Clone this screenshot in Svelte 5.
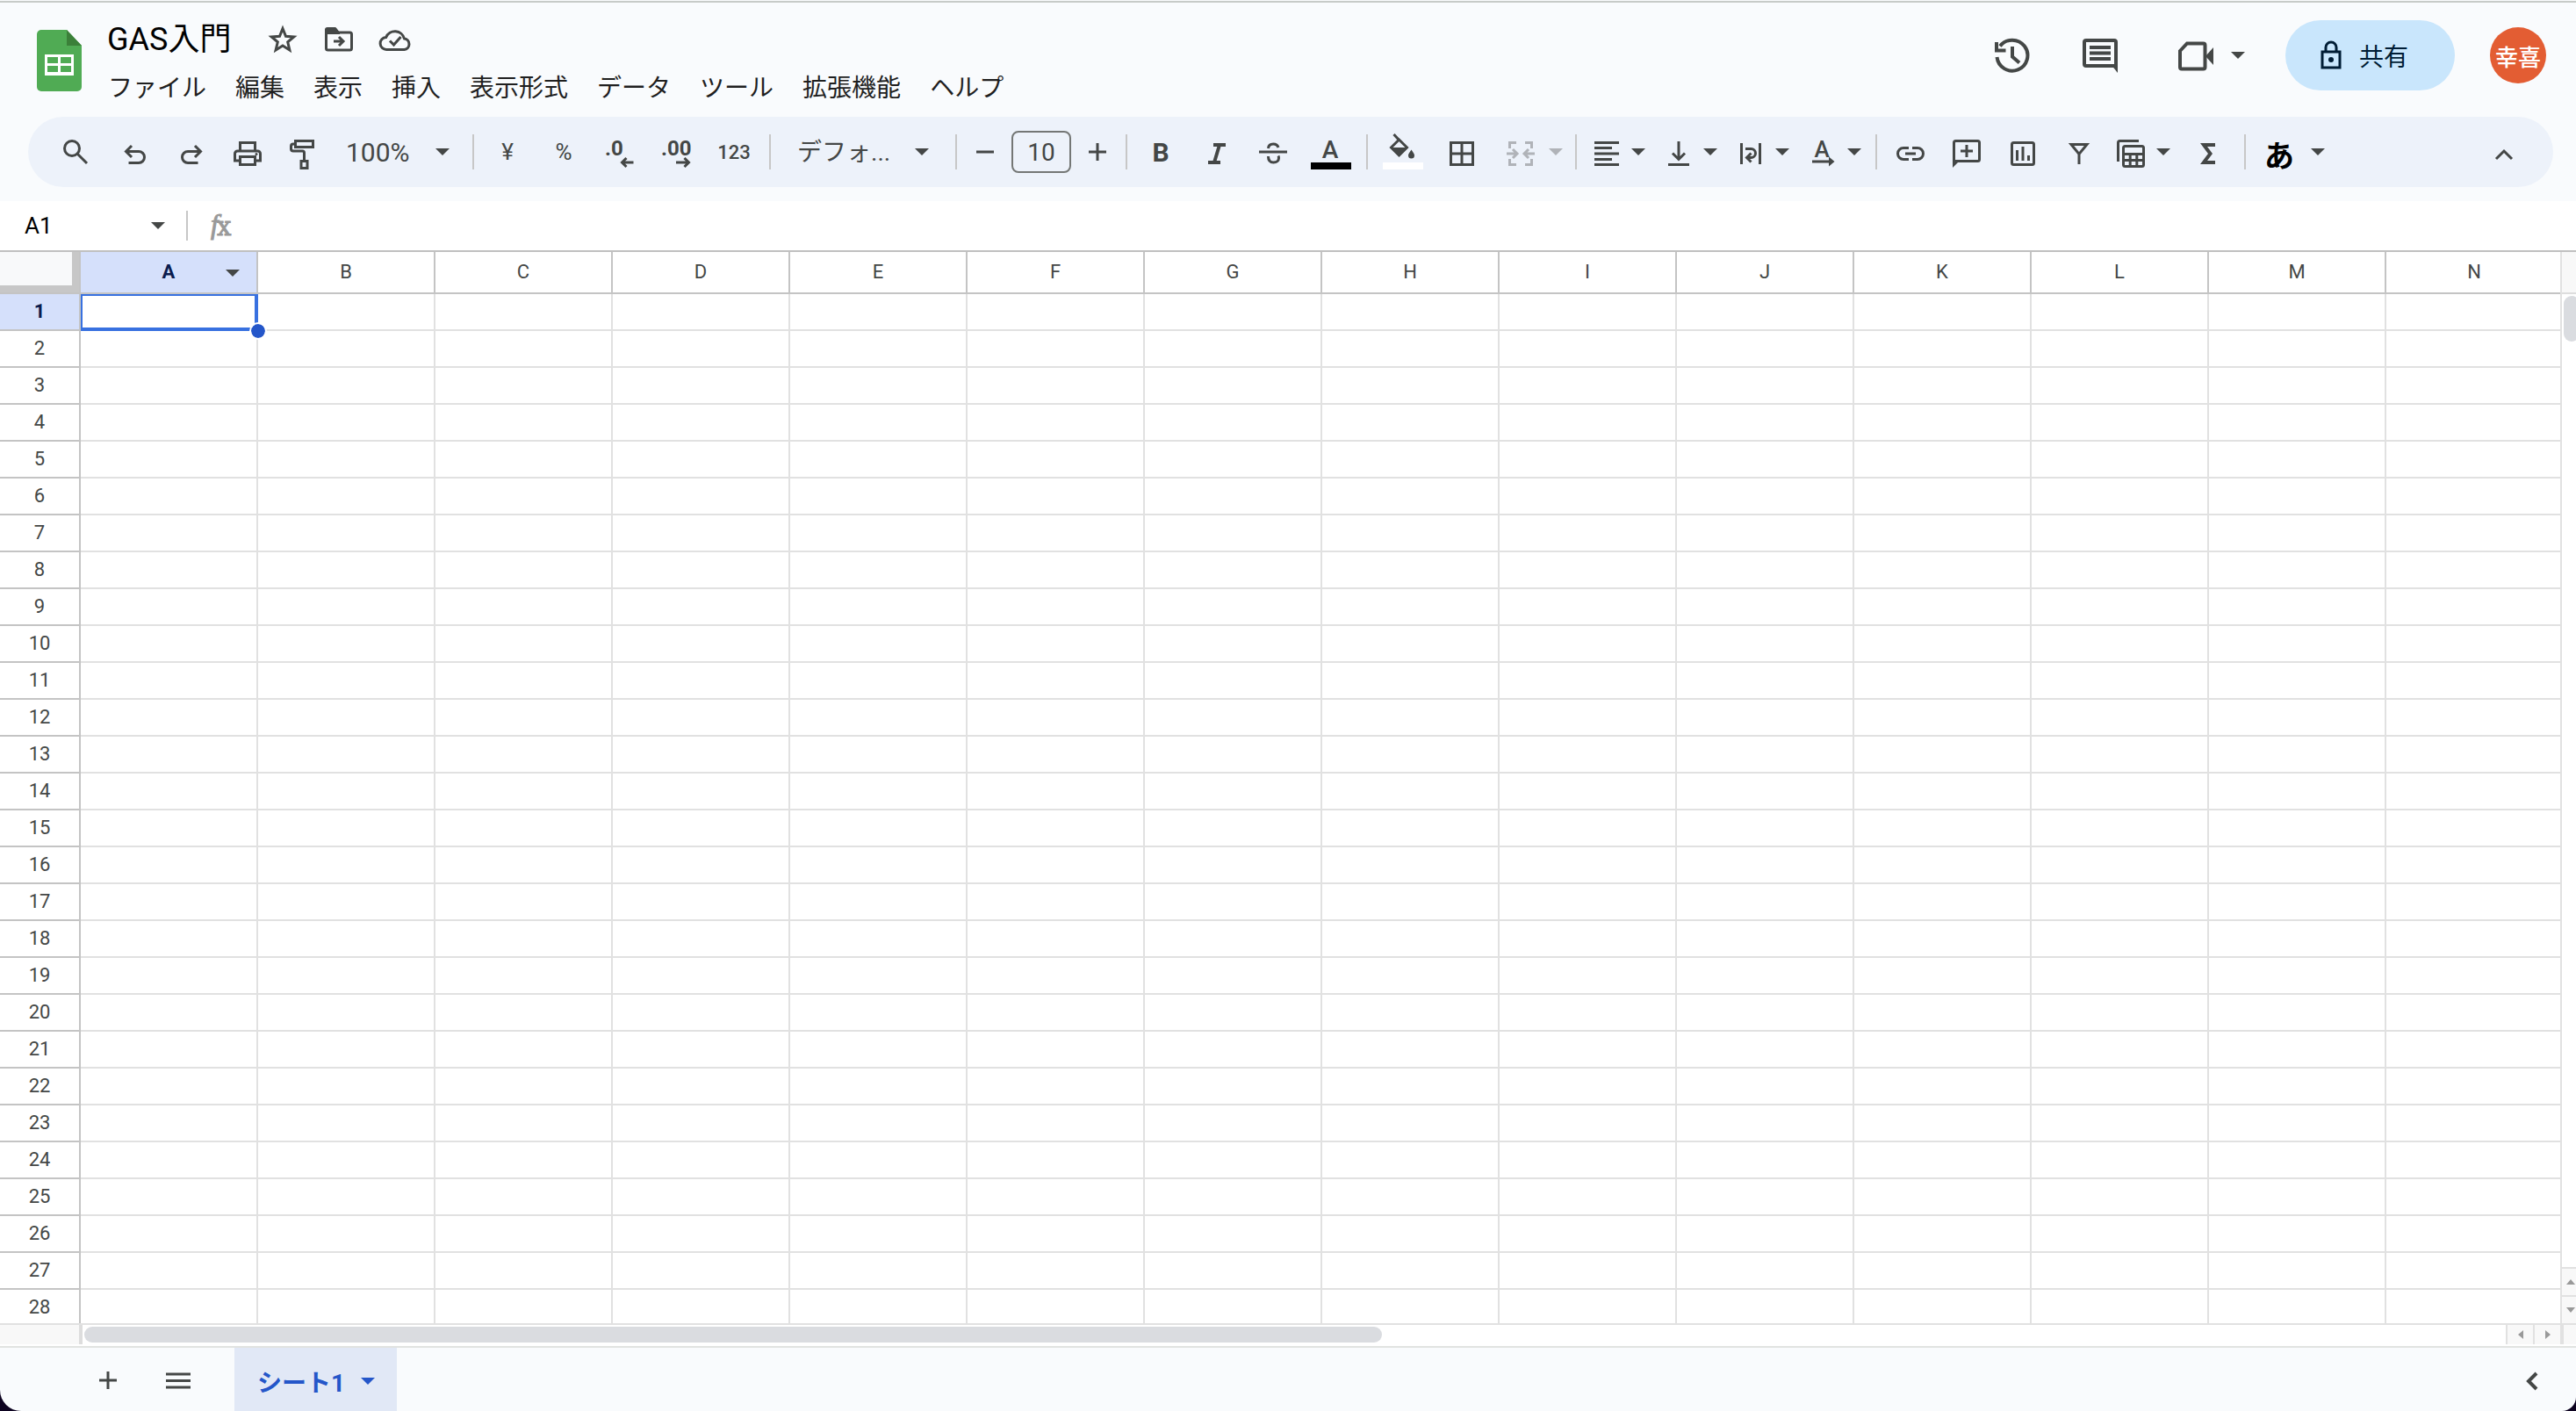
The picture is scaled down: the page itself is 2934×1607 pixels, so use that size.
<script lang="ts">
	const menus = ['ファイル', '編集', '表示', '挿入', '表示形式', 'データ', 'ツール', '拡張機能', 'ヘルプ'];
	const columns = 'ABCDEFGHIJKLMN'.split('');
	const rows = Array.from({ length: 28 }, (_, i) => i + 1);

	let title = $state('GAS入門');
	let zoom = $state('100%');
	let font = $state('デフォ...');
	let fontSize = $state('10');
	let cellName = $state('A1');
	let formula = $state('');
	let selected = $state({ column: 'A', row: 1 });

	// visible part of the sheet
	let thumbWidth = 53.6;

	function select(column: string, row: number) {
		selected = { column, row };
		cellName = column + row;
	}
</script>

{#snippet caret()}
	<svg class="caret" viewBox="0 0 16 8" aria-hidden="true"><path d="M0 0h16L8 8z" /></svg>
{/snippet}

<div class="app">
	<header>
		<svg class="logo" viewBox="0 0 52 70" aria-hidden="true">
			<path d="M5 0h29l17 18v47a5 5 0 0 1-5 5H5a5 5 0 0 1-5-5V5a5 5 0 0 1 5-5z" fill="#50ab54" />
			<path d="M34 0l17 18H34z" fill="#3b8039" />
			<path d="M9 28h33v24H9zM12 31v7h12v-7zM27 31v7h12v-7zM12 41v7h12v-7zM27 41v7h12v-7z" fill="#fff" fill-rule="evenodd" />
		</svg>

		<div class="doc">
			<div class="title-row">
				<input class="title" aria-label="名前を変更" bind:value={title} />
				<button class="tool" aria-label="スター">
					<svg class="icon" viewBox="0 0 40 40"><path d="M20 7.500l3.500 8.700 9.300.7-7.100 6 2.200 9.100-7.900-4.900-7.900 4.900 2.200-9.100-7.100-6 9.300-.7z" /></svg>
				</button>
				<button class="tool" aria-label="移動">
					<svg class="icon" viewBox="0 0 40 40">
						<path d="M5.500 13V10a2 2 0 0 1 2-2H16l3 4h13.500a2 2 0 0 1 2 2v16a2 2 0 0 1-2 2h-25a2 2 0 0 1-2-2z" />
						<path d="M4 14V9a3 3 0 0 1 3-3h9l5 6v2z" class="solid" />
						<path d="M14 22h9M20 17l5 5-5 5" />
					</svg>
				</button>
				<button class="tool" aria-label="ドキュメントのステータス">
					<svg class="icon" viewBox="0 0 40 40">
						<path d="M10.500 31.500a7 7 0 0 1-.8-14 11 11 0 0 1 20.800 1.500 6.300 6.300 0 0 1 0 12.500z" />
						<path d="M14 21.500l4.500 4.500 8-9" />
					</svg>
				</button>
			</div>
			<nav>
				{#each menus as menu}
					<button>{menu}</button>
				{/each}
			</nav>
		</div>

		<div class="actions">
			<button class="action" aria-label="変更履歴">
				<svg class="icon thick" viewBox="0 0 40 40">
					<path d="M2.500 22a17.500 17.500 0 1 0 3.500-12.500" />
					<path d="M2 5v9.500h10.500M20 10v11.500l8 7" />
				</svg>
			</button>
			<button class="action" aria-label="コメント">
				<svg class="icon thick" viewBox="0 0 40 40">
					<path d="M38 35V5a2 2 0 0 0-2-2H4a2 2 0 0 0-2 2v25a2 2 0 0 0 2 2h33" />
					<path d="M32 30h8v10z" class="solid" />
					<path d="M8 11h24M8 17.500h24M8 24h24" />
				</svg>
			</button>
			<button class="meet" aria-label="ビデオ会議">
				<svg class="icon thick" viewBox="0 0 40 40">
					<path d="M2 15l8-8.500h18.500a2 2 0 0 1 2 2v25a2 2 0 0 1-2 2H4a2 2 0 0 1-2-2z" />
					<path d="M31 21l9-10v20z" class="solid" />
				</svg>
				{@render caret()}
			</button>
			<button class="share">
				<svg class="icon" viewBox="0 0 24 34">
					<path d="M2 13h20v18H2zM6 12V8a6 6 0 0 1 12 0v4" />
					<circle cx="12" cy="22" r="3" class="solid" />
				</svg>
				共有
			</button>
			<button class="avatar">幸喜</button>
		</div>
	</header>

	<div class="toolbar">
		<button class="tool search" aria-label="メニューを検索">
			<svg class="icon" viewBox="0 0 40 40"><ellipse cx="16" cy="16" rx="8.500" ry="8.500" /><path d="M22.500 22.500L33 33" /></svg>
		</button>
		<button class="tool" aria-label="元に戻す">
			<svg class="icon" viewBox="0 0 40 40"><path d="M10 19.500h14a6.500 6.500 0 0 1 0 13H12.500M16 13l-6.500 6.500L16 26" /></svg>
		</button>
		<button class="tool" aria-label="やり直し">
			<svg class="icon" viewBox="0 0 40 40"><path d="M30 19.500H16a6.500 6.500 0 0 0 0 13h11.500M24 13l6.500 6.500L24 26" /></svg>
		</button>
		<button class="tool" aria-label="印刷">
			<svg class="icon" viewBox="0 0 40 40">
				<path d="M11.500 19V9.500h17V19M11.500 30h-6v-8a3 3 0 0 1 3-3h23a3 3 0 0 1 3 3v8h-6M11.500 25.500h17v9h-17z" />
				<circle cx="30" cy="22.500" r="1.500" class="solid" />
			</svg>
		</button>
		<button class="tool" aria-label="書式を貼り付け">
			<svg class="icon" viewBox="-1 0 40 40">
				<path d="M9.500 7.500h20v7h-20zM9.500 11H7a2.500 2.500 0 0 0-2.500 2.500v3A2.500 2.500 0 0 0 7 19h10.500a2 2 0 0 1 2 2v9M16 30.500h7v8h-7z" />
			</svg>
		</button>
		<div class="picker zoom">
			<select aria-label="ズーム" bind:value={zoom}>
				<option>100%</option>
			</select>
			{@render caret()}
		</div>
		<span class="divider"></span>

		<button class="tool">¥</button>
		<button class="tool">%</button>
		<button class="tool" aria-label="小数点以下の桁数を減らす">
			<svg class="icon" viewBox="0 0 40 40">
				<text x="3" y="24" class="decimal">.0</text>
				<path d="M35.500 32H23M27.500 27L22.500 32l5 5" />
			</svg>
		</button>
		<button class="tool" aria-label="小数点以下の桁数を増やす">
			<svg class="icon" viewBox="0 0 40 40">
				<text x="3" y="24" class="decimal">.00</text>
				<path d="M20 32h13M29.500 27l5 5-5 5" />
			</svg>
		</button>
		<button class="tool last number">123</button>
		<span class="divider"></span>

		<div class="picker font">
			<select aria-label="フォント" bind:value={font}>
				<option>デフォ...</option>
			</select>
			{@render caret()}
		</div>
		<span class="divider"></span>

		<div class="size">
			<button aria-label="フォントサイズを縮小">
				<svg class="icon" viewBox="0 0 40 40"><path d="M10 20h20" /></svg>
			</button>
			<input aria-label="フォントサイズ" bind:value={fontSize} />
			<button aria-label="フォントサイズを拡大">
				<svg class="icon" viewBox="0 0 40 40"><path d="M10 20h20M20 10v20" /></svg>
			</button>
		</div>
		<span class="divider"></span>

		<button class="tool bold">B</button>
		<button class="tool" aria-label="斜体">
			<svg class="icon thick" viewBox="0 0 40 40"><path d="M16 12h14M10 32h14M23 12l-6 20" /></svg>
		</button>
		<button class="tool" aria-label="取り消し線">
			<svg class="icon" viewBox="0 0 40 40">
				<path d="M4 20h32" />
				<path d="M14.500 16c.3-3.300 2.500-5 5.700-5 3 0 5 1.500 5.800 4M14.500 25c0 4.500 2.300 7 6 7s6-2 6-5c0-1-.2-1.700-.6-2.400" />
			</svg>
		</button>
		<button class="tool last" aria-label="テキストの色">
			<svg class="icon swatch" viewBox="0 0 48 40">
				<text x="23" y="27" text-anchor="middle" class="letter">A</text>
				<rect x="1" y="32" width="46" height="8" fill="#000" stroke="none" />
			</svg>
		</button>
		<span class="divider"></span>

		<button class="tool last" aria-label="塗りつぶしの色">
			<svg class="icon swatch" viewBox="0 0 48 40">
				<path d="M13.500 0l6 6.500M19.500 6L10.500 15l9 9 9-9z" />
				<path d="M9.500 15h20l-10 10zM33.500 17.500c2.300 3.200 3.500 5 3.500 6.500a3.500 3.500 0 0 1-7 0c0-1.500 1.200-3.300 3.500-6.500z" class="solid" />
				<rect x="1" y="32" width="46" height="8" fill="#fff" stroke="none" />
			</svg>
		</button>
		<button class="tool" aria-label="枠線">
			<svg class="icon" viewBox="0 0 40 40"><path d="M8.500 9.500h25v25h-25zM21 9v26M8 22h26" /></svg>
		</button>
		<button class="dropdown wide" disabled aria-label="セルを結合">
			<svg class="icon" viewBox="0 0 40 40">
				<path d="M19 9.500h-7.500V16M29 9.500h7.500V16M19 34.500h-7.500V28M29 34.500h7.500V28" />
				<path d="M8 22h11M15 17l5 5-5 5M40 22H29M33 17l-5 5 5 5" />
			</svg>
			{@render caret()}
		</button>
		<span class="divider"></span>

		<button class="dropdown" aria-label="水平方向の配置">
			<svg class="icon" viewBox="0 0 40 40"><path d="M6 9.500h28M6 15.500h20M6 22h28M6 28.500h20M6 34.500h28" /></svg>
			{@render caret()}
		</button>
		<button class="dropdown" aria-label="垂直方向の配置">
			<svg class="icon" viewBox="0 0 40 40"><path d="M8 34.500h24M20 8v20M13 21.500l7 7 7-7" /></svg>
			{@render caret()}
		</button>
		<button class="dropdown" aria-label="テキストを折り返す">
			<svg class="icon" viewBox="0 0 40 40"><path d="M9.500 10v24M30.500 10v24M14 16.500h6.500a5 5 0 0 1 0 10H16M20.500 21.500l-5 5 5 5" /></svg>
			{@render caret()}
		</button>
		<button class="dropdown" aria-label="テキストの回転">
			<svg class="icon" viewBox="0 0 40 40">
				<text x="19" y="26" text-anchor="middle" class="letter small">A</text>
				<path d="M8 31h20" />
				<path d="M27 25.500l6.500 5.500-6.500 5.500z" class="solid" />
			</svg>
			{@render caret()}
		</button>
		<span class="divider"></span>

		<button class="tool" aria-label="リンクを挿入">
			<svg class="icon" viewBox="0 0 40 40"><path d="M18 15.500h-6a6.500 6.500 0 0 0 0 13h6M22 15.500h6a6.500 6.500 0 0 1 0 13h-6M14 22h12" /></svg>
		</button>
		<button class="tool" aria-label="コメントを挿入">
			<svg class="icon" viewBox="0 0 40 40">
				<path d="M5.500 34V9.500a2 2 0 0 1 2-2h25a2 2 0 0 1 2 2v19a2 2 0 0 1-2 2H7M20 12v14M13 19h14" />
				<path d="M4 30h8l-8 8z" class="solid" />
			</svg>
		</button>
		<button class="tool" aria-label="グラフを挿入">
			<svg class="icon" viewBox="0 0 40 40">
				<rect x="7.500" y="9.500" width="25" height="25" rx="2" />
				<path d="M13.500 18v12M20 14v16M26.500 24v6" />
			</svg>
		</button>
		<button class="tool" aria-label="フィルタを作成">
			<svg class="icon" viewBox="0 0 40 40"><path d="M11 11.500h18L20 22.500zM20 22v12" /></svg>
		</button>
		<button class="dropdown" aria-label="表示形式の一覧">
			<svg class="icon" viewBox="0 0 40 40">
				<path d="M28 7.500H6.500a2 2 0 0 0-2 2V31" />
				<rect x="10.500" y="13.500" width="23" height="23" rx="2" />
				<path d="M10 22.500h24M10 29.500h24M18.200 22v14M25.800 22v14" />
			</svg>
			{@render caret()}
		</button>
		<button class="tool last" aria-label="関数">
			<svg class="icon thick" viewBox="0 0 40 40"><path d="M27 12H14l7.500 10L14 32h13" /></svg>
		</button>
		<span class="divider"></span>

		<button class="dropdown wide kana"><span>あ</span>{@render caret()}</button>

		<button class="tool collapse" aria-label="メニューを非表示">
			<svg class="icon" viewBox="0 0 40 40"><path d="M11 28l9-9 9 9" /></svg>
		</button>
	</div>

	<div class="formula-bar">
		<input class="name-box" aria-label="名前ボックス" bind:value={cellName} />
		{@render caret()}
		<span class="divider"></span>
		<svg class="fx" viewBox="0 0 32 40" aria-hidden="true">
			<text x="6" y="29" class="f">f</text>
			<text x="13" y="31" class="x">x</text>
		</svg>
		<input class="formula" aria-label="数式" bind:value={formula} />
	</div>

	<main>
		<div class="pane">
			<table>
				<thead>
					<tr>
						<th class="corner" aria-label="すべて選択"></th>
						{#each columns as column}
							<th class="column" class:active={selected.column === column}>
								{column}
								{#if selected.column === column}
									<span class="column-menu">{@render caret()}</span>
								{/if}
							</th>
						{/each}
					</tr>
				</thead>
				<tbody>
					{#each rows as row}
						<tr>
							<th class="row" class:active={selected.row === row}>{row}</th>
							{#each columns as column}
								<td onclick={() => select(column, row)}>
									{#if selected.column === column && selected.row === row}
										<span class="selection"></span>
										<span class="handle"></span>
									{/if}
								</td>
							{/each}
						</tr>
					{/each}
				</tbody>
			</table>
		</div>

		<div class="vscroll">
			<div class="vscroll-head"></div>
			<div class="vtrack"><div class="vthumb"></div></div>
			<button aria-label="上へ"><svg viewBox="0 0 12 12"><path d="M6 3l5 6H1z" /></svg></button>
			<button aria-label="下へ"><svg viewBox="0 0 12 12"><path d="M6 9l5-6H1z" /></svg></button>
		</div>
	</main>

	<div class="hscroll">
		<div class="hscroll-head"></div>
		<div class="htrack"><div class="hthumb" style:width="{thumbWidth}%"></div></div>
		<button aria-label="左へ"><svg viewBox="0 0 12 12"><path d="M3 6l6-5v10z" /></svg></button>
		<button aria-label="右へ"><svg viewBox="0 0 12 12"><path d="M9 6L3 1v10z" /></svg></button>
		<div class="hscroll-end"></div>
	</div>

	<footer>
		<button class="sheet-tool" aria-label="シートを追加">
			<svg class="icon" viewBox="0 0 40 40"><path d="M10 20h20M20 10v20" /></svg>
		</button>
		<button class="sheet-tool" aria-label="すべてのシート">
			<svg class="icon" viewBox="0 0 40 40"><path d="M6 13h28M6 20.500h28M6 28h28" /></svg>
		</button>
		<button class="tab">シート1 {@render caret()}</button>
		<button class="side-panel" aria-label="サイドパネルを表示">
			<svg class="icon thick" viewBox="0 0 40 40"><path d="M25 11l-9 9 9 9" /></svg>
		</button>
	</footer>
</div>

<style>
	:global(body) {
		margin: 0;
		background: #0d0320;
	}

	.app {
		display: flex;
		flex-direction: column;
		height: 100vh;
		overflow: hidden;
		background: #f9fbfd;
		border-radius: 0 0 16px 24px;
		font-family: Roboto, 'Noto Sans CJK JP', sans-serif;
		font-size: 28px;
		color: #444746;
	}

	button,
	input,
	select {
		margin: 0;
		padding: 0;
		border: 0;
		background: none;
		font: inherit;
		color: inherit;
		outline: none;
	}

	button {
		display: flex;
		align-items: center;
		justify-content: center;
		flex-shrink: 0;
		white-space: nowrap;
	}

	svg {
		display: block;
		flex-shrink: 0;
		overflow: visible;
	}

	.icon {
		width: 40px;
		height: 40px;
		fill: none;
		stroke: currentColor;
		stroke-width: 3;
	}

	.icon.thick {
		stroke-width: 4;
	}

	.icon .solid,
	.icon text {
		fill: currentColor;
		stroke: none;
	}

	.icon.swatch {
		width: 48px;
	}

	.caret {
		width: 16px;
		height: 8px;
		fill: currentColor;
	}

	.divider {
		flex-shrink: 0;
		width: 2px;
		height: 40px;
		margin: 0 6px;
		background: #c7c7c7;
	}

	/* header */
	header {
		display: flex;
		align-items: flex-start;
		height: 130px;
		margin-top: 1px;
		padding: 0 34px 0 42px;
		border-top: 2px solid #c7cbc8;
	}

	.logo {
		width: 52px;
		height: 70px;
		margin: 31px 28px 0 0;
	}

	.doc {
		padding-top: 12px;
	}

	.title-row {
		display: flex;
		align-items: center;
		height: 60px;
	}

	.title {
		width: 168px;
		height: 52px;
		padding-bottom: 8px;
		font-size: 36px;
		color: #000;
	}

	nav {
		display: flex;
		gap: 33px;
		height: 42px;
		padding: 2px 0 0 1px;
		color: #1f1f1f;
	}

	.actions {
		display: flex;
		align-items: center;
		margin-left: auto;
		padding-top: 20px;
	}

	.action {
		width: 100px;
		height: 80px;
	}

	.meet {
		gap: 20px;
		height: 80px;
		padding: 0 46px 0 39px;
	}

	.share {
		justify-content: flex-start;
		gap: 20px;
		width: 193px;
		height: 80px;
		margin-right: 40px;
		padding-left: 40px;
		border-radius: 40px;
		background: #c9e6fc;
		color: #001d35;
	}

	.share .icon {
		width: 24px;
		height: 34px;
	}

	.avatar {
		width: 64px;
		height: 64px;
		border-radius: 50%;
		background: #e35d33;
		color: #fff;
		font-size: 26px;
		font-weight: 500;
	}

	/* toolbar */
	.toolbar {
		display: flex;
		align-items: center;
		height: 80px;
		margin: 0 26px 16px 32px;
		padding: 0 24px 0 22px;
		border-radius: 40px;
		background: #edf2fa;
	}

	.tool {
		width: 64px;
		height: 60px;
		font-size: 26px;
	}

	.tool.last {
		width: 68px;
	}

	.tool.number {
		font-size: 22px;
		font-weight: 500;
	}

	.tool.bold {
		font-size: 30px;
		font-weight: 700;
	}

	.search {
		margin-right: 4px;
	}

	.collapse {
		margin-left: auto;
	}

	.decimal {
		font-size: 24px;
		font-weight: 700;
	}

	.letter {
		font-size: 28px;
		font-weight: 500;
	}

	.letter.small {
		font-size: 26px;
	}

	.picker {
		display: grid;
		align-items: center;
		flex-shrink: 0;
	}

	.picker select,
	.picker .caret {
		grid-area: 1 / 1;
	}

	.picker select {
		width: 100%;
		height: 60px;
		appearance: none;
	}

	.picker .caret {
		justify-self: end;
		pointer-events: none;
	}

	.zoom {
		width: 154px;
	}

	.zoom select {
		padding-left: 16px;
		font-size: 30px;
	}

	.zoom .caret {
		margin-right: 20px;
	}

	.font {
		width: 198px;
	}

	.font select {
		padding-left: 24px;
	}

	.font .caret {
		margin-right: 24px;
	}

	.size {
		display: flex;
		align-items: center;
		gap: 4px;
	}

	.size button {
		width: 52px;
		height: 60px;
	}

	.size input {
		box-sizing: border-box;
		width: 68px;
		height: 48px;
		border: 2px solid #747775;
		border-radius: 8px;
		text-align: center;
	}

	.dropdown {
		justify-content: flex-start;
		gap: 8px;
		width: 82px;
		height: 60px;
		padding-left: 8px;
	}

	.dropdown.wide {
		gap: 16px;
		width: 92px;
		padding-left: 12px;
	}

	.dropdown:disabled {
		color: #b0b3b8;
	}

	.kana span {
		width: 40px;
		padding-top: 4px;
		text-align: center;
		font-size: 34px;
		font-weight: 700;
		color: #000;
	}

	/* formula bar */
	.formula-bar {
		display: flex;
		align-items: center;
		height: 56px;
		background: #fff;
		border-bottom: 2px solid #c0c0c0;
	}

	.name-box {
		width: 144px;
		height: 48px;
		padding-left: 28px;
		font-size: 26px;
		color: #000;
	}

	.formula-bar .divider {
		height: 34px;
		margin: 0 20px 0 24px;
	}

	.fx {
		width: 32px;
		height: 40px;
		fill: #999;
	}

	.fx .f {
		font: italic 400 31px 'Liberation Serif', serif;
		stroke: #999;
		stroke-width: 1;
	}

	.fx .x {
		font: 400 29px 'DejaVu Serif', serif;
		stroke: #999;
		stroke-width: 1;
	}

	.formula {
		flex: 1;
		height: 48px;
		padding: 0 16px;
		font-size: 26px;
	}

	/* sheet */
	main {
		display: flex;
		flex: 1;
		min-height: 0;
		background: #fff;
	}

	.pane {
		flex: 1;
		min-width: 0;
		overflow: hidden;
	}

	table {
		table-layout: fixed;
		width: 1px;
		border-spacing: 0;
		font-size: 22px;
	}

	th,
	td {
		box-sizing: border-box;
		position: relative;
		width: 202px;
		height: 42px;
		padding: 0;
		border: solid #e1e1e1;
		border-width: 0 2px 2px 0;
		font-weight: 400;
		line-height: 26px;
	}

	th {
		border-color: #c4c4c4;
	}

	th.corner {
		width: 92px;
		height: 48px;
		background: #f8f9fa;
		box-shadow: inset -8px -8px #c7c7c7;
	}

	th.row {
		width: 92px;
	}

	th.active {
		background: #d5e0fb;
		color: #0b1c4e;
		font-weight: 700;
	}

	.column-menu {
		position: absolute;
		top: 20px;
		right: 19px;
		color: #444746;
	}

	.selection {
		position: absolute;
		inset: 0 -2px -2px 0;
		border: solid #3871e0;
		border-width: 2px 4px 4px 2px;
	}

	.handle {
		position: absolute;
		right: -12px;
		bottom: -12px;
		z-index: 1;
		width: 16px;
		height: 16px;
		border: 2px solid #fff;
		border-radius: 50%;
		background: #2456c9;
		background-clip: padding-box;
	}

	/* scrollbars */
	.vscroll {
		display: flex;
		flex-direction: column;
		width: 16px;
		border-left: 2px solid #e1e1e1;
		overflow: hidden;
	}

	.vscroll-head {
		height: 46px;
		background: #f8f8f8;
		border-bottom: 2px solid #ddd;
	}

	.vtrack {
		flex: 1;
		padding: 2px 0 0 2px;
	}

	.vthumb {
		width: 18px;
		height: 52px;
		border-radius: 9px;
		background: #dadce0;
	}

	.vscroll button,
	.hscroll button {
		background: #f8f8f8;
	}

	.vscroll button {
		height: 32px;
		padding-left: 4px;
		border-top: 2px solid #e1e1e1;
	}

	.vscroll button svg,
	.hscroll button svg {
		width: 12px;
		height: 12px;
		fill: #999;
	}

	.hscroll {
		display: flex;
		height: 22px;
		padding-bottom: 2px;
		background: #fff;
		border-top: 2px solid #e1e1e1;
	}

	.hscroll-head {
		width: 90px;
		background: #f8f8f8;
		border-right: 4px solid #ddd;
	}

	.htrack {
		flex: 1;
		padding: 2px 0 2px 2px;
	}

	.hthumb {
		height: 18px;
		border-radius: 9px;
		background: #dadce0;
	}

	.hscroll button {
		width: 31px;
		border-left: 2px solid #e1e1e1;
	}

	.hscroll-end {
		width: 14px;
		background: #f8f8f8;
		border-left: 4px solid #e1e1e1;
	}

	/* sheet tabs */
	footer {
		display: flex;
		height: 72px;
		padding: 0 16px 0 83px;
		border-top: 2px solid #e1e3e1;
	}

	.sheet-tool {
		width: 80px;
		padding-top: 2px;
	}

	.tab {
		justify-content: flex-start;
		gap: 18px;
		width: 185px;
		margin-left: 24px;
		padding: 4px 0 0 26px;
		background: #e1e8f6;
		color: #2456c9;
		font-weight: 700;
	}

	.side-panel {
		width: 68px;
		padding-top: 4px;
		margin-left: auto;
	}
</style>
